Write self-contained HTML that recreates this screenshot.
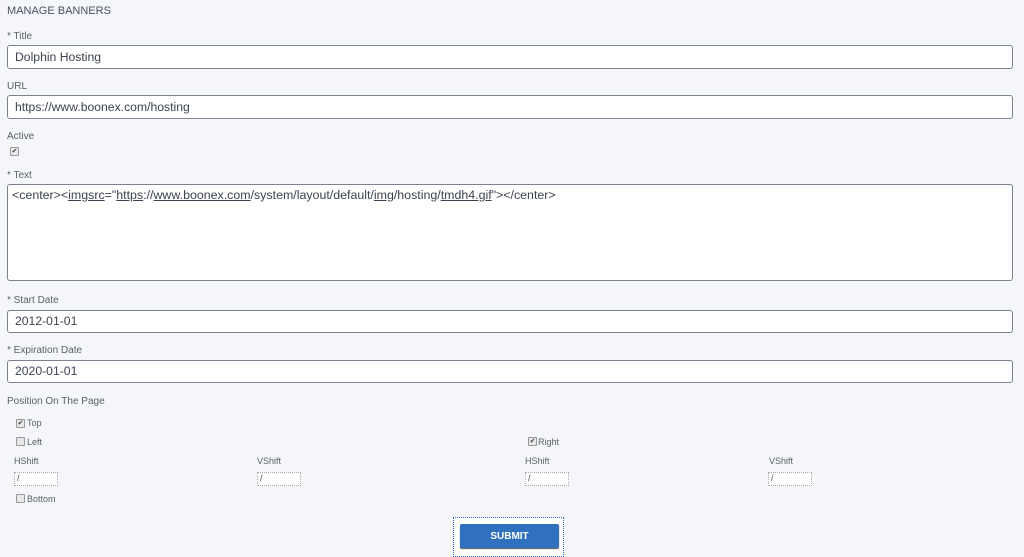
<!DOCTYPE html>
<html><head><style>
body{margin:0;width:1024px;height:556px;background:#f4f6f9;font-family:"Liberation Sans",sans-serif;position:relative;overflow:hidden;color:#5a5f6a}
.a{position:absolute;white-space:nowrap}
.l{font-size:10px}
.in{position:absolute;left:7px;width:1006px;background:#fff;border:1px solid #7a8290;border-radius:3px;box-sizing:border-box;font-size:12.2px;color:#3c4250;padding-left:7px}
.cb{position:absolute;width:7px;height:7px;border:1px solid #999;background:#e8e8e8;border-radius:1px;font-size:7px;line-height:7px;text-align:center;color:#444}
.sm{position:absolute;width:44px;height:14px;background:#fff;border:1px dotted #aaa;box-sizing:border-box;font-size:9px;padding-left:2px;color:#555}
.u{text-decoration:underline}
</style></head><body>
<div class="a" style="left:7px;top:5px;font-size:11px;color:#4a5060">MANAGE BANNERS</div>
<div class="a l" style="left:7px;top:31px">* Title</div>
<div class="in" style="top:45px;height:24px;line-height:22px">Dolphin Hosting</div>
<div class="a l" style="left:7px;top:81px">URL</div>
<div class="in" style="top:95px;height:24px;line-height:22px">https://www.boonex.com/hosting</div>
<div class="a l" style="left:7px;top:131px">Active</div>
<div class="cb" style="left:10px;top:147px">✔</div>
<div class="a l" style="left:7px;top:170px">* Text</div>
<div class="in" style="top:184px;height:97px;font-size:12.4px;padding:3px 4px;line-height:15px">&lt;center&gt;&lt;<span class="u">imgsrc</span>="<span class="u">https</span>://<span class="u">www.boonex.com</span>/system/layout/default/<span class="u">img</span>/hosting/<span class="u">tmdh4.gif</span>"&gt;&lt;/center&gt;</div>
<div class="a l" style="left:7px;top:295px">* Start Date</div>
<div class="in" style="top:310px;height:23px;line-height:21px">2012-01-01</div>
<div class="a l" style="left:7px;top:345px">* Expiration Date</div>
<div class="in" style="top:360px;height:23px;line-height:21px">2020-01-01</div>
<div class="a l" style="left:7px;top:396px">Position On The Page</div>
<div class="cb" style="left:16px;top:419px">✔</div><div class="a" style="left:27px;top:418px;font-size:9px">Top</div>
<div class="cb" style="left:16px;top:437px"></div><div class="a" style="left:27px;top:437px;font-size:9px">Left</div>
<div class="cb" style="left:528px;top:437px">✔</div><div class="a" style="left:538px;top:437px;font-size:9px">Right</div>
<div class="a" style="left:14px;top:456px;font-size:9px">HShift</div>
<div class="a" style="left:257px;top:456px;font-size:9px">VShift</div>
<div class="a" style="left:525px;top:456px;font-size:9px">HShift</div>
<div class="a" style="left:769px;top:456px;font-size:9px">VShift</div>
<div class="sm" style="left:14px;top:472px">/</div>
<div class="sm" style="left:257px;top:472px">/</div>
<div class="sm" style="left:525px;top:472px">/</div>
<div class="sm" style="left:768px;top:472px">/</div>
<div class="cb" style="left:16px;top:494px"></div><div class="a" style="left:27px;top:494px;font-size:9px">Bottom</div>
<div style="position:absolute;left:453px;top:517px;width:111px;height:40px;border:1px dotted #2d6bb5;box-sizing:border-box;background:#fff"></div>
<div style="position:absolute;left:460px;top:524px;width:99px;height:24px;background:#2f71be;border-radius:2px;box-shadow:0 1px 1px #555;color:#fff;font-size:10px;font-weight:bold;text-align:center;line-height:25px">SUBMIT</div>
</body></html>
